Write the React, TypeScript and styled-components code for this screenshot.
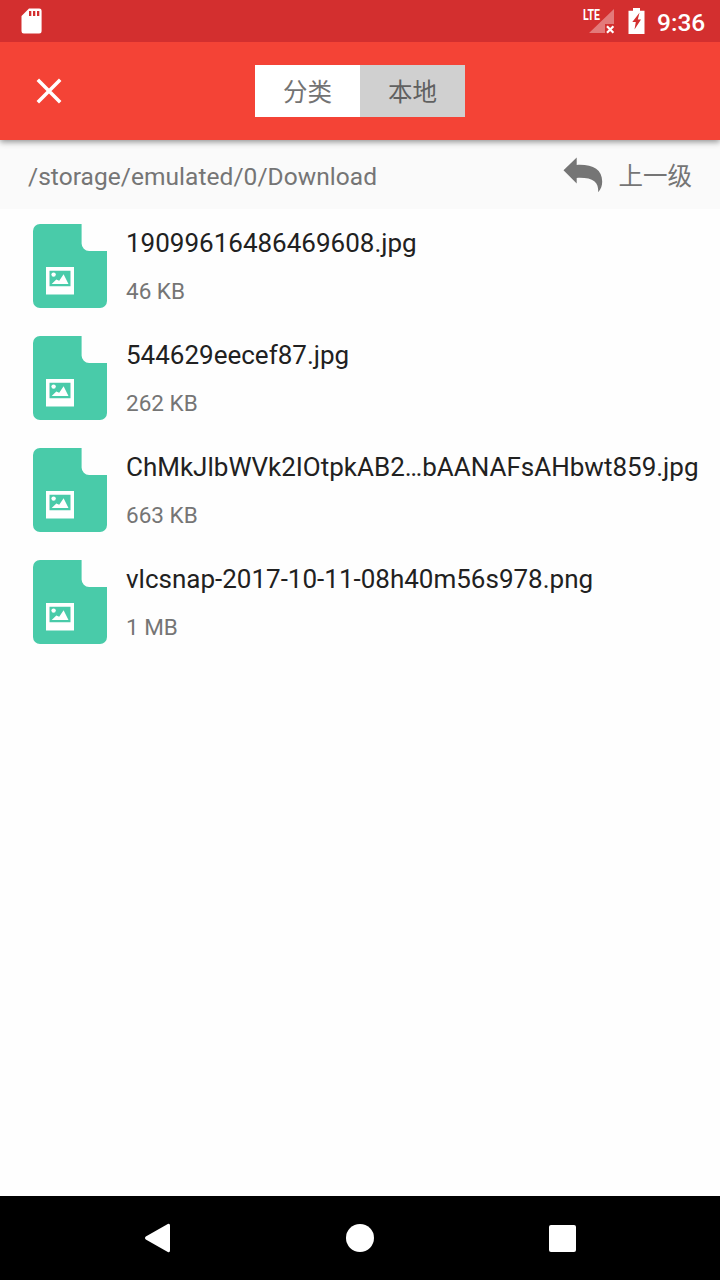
import React from 'react';
import styled, { createGlobalStyle } from 'styled-components';

const GlobalStyle = createGlobalStyle`
  * { box-sizing: border-box; }
  body { margin: 0; background: #fefefe; font-family: Roboto, "Noto Sans CJK SC", sans-serif; }
  svg { display: block; flex: none; }
`;

const Screen = styled.div`
  width: 720px;
  height: 1280px;
  display: flex;
  flex-direction: column;
  overflow: hidden;
  background: #fefefe;
`;

const StatusBar = styled.header`
  height: 42px;
  flex: none;
  display: flex;
  align-items: center;
  padding: 0 14px 0 21px;
  background: #d32f2f;
  z-index: 2;
`;

const StatusIcons = styled.div`
  margin-left: auto;
  display: flex;
  align-items: center;
`;

const BatterySlot = styled.span`
  margin-left: 13px;
`;

const Clock = styled.time`
  width: 49px;
  margin-left: 12px;
  font-size: 24.5px;
  font-weight: 500;
  line-height: 42px;
  padding-top: 2px;
  height: 42px;
  color: #fff;
  white-space: nowrap;
`;

const Toolbar = styled.div`
  height: 98px;
  flex: none;
  display: grid;
  grid-template-columns: 1fr 210px 1fr;
  align-items: center;
  background: #f44336;
  box-shadow: 0 2px 6px rgba(0, 0, 0, 0.42);
  z-index: 1;
`;

const CloseButton = styled.button`
  width: 98px;
  height: 98px;
  display: grid;
  place-items: center;
  border: 0;
  padding: 0;
  background: none;
`;

const Segments = styled.div`
  display: flex;
  height: 52.5px;
`;

const Segment = styled.button<{ $active?: boolean }>`
  flex: 1;
  border: 0;
  padding: 3px 0 0;
  font: 24.5px/49px Roboto, "Noto Sans CJK SC", sans-serif;
  color: ${(p) => (p.$active ? '#606060' : '#737373')};
  background: ${(p) => (p.$active ? '#d0d0d0' : '#fff')};
`;

const PathBar = styled.div`
  height: 69px;
  margin-bottom: 1px;
  flex: none;
  display: flex;
  align-items: center;
  padding: 3px 28px 0;
  background: #fafafa;
  color: #757575;
  font-size: 24.5px;
  letter-spacing: 0.05px;
`;

const UpButton = styled.button`
  margin-left: auto;
  display: flex;
  align-items: center;
  gap: 16px;
  border: 0;
  padding: 0;
  background: none;
  color: inherit;
  font: 24.5px/36px Roboto, "Noto Sans CJK SC", sans-serif;
`;

const ArrowSlot = styled.span`
  margin-top: -2px;
`;

const UpLabel = styled.span`
  margin-top: 1px;
`;

const FileList = styled.ul`
  flex: 1;
  margin: 0;
  padding: 0;
  list-style: none;
`;

const FileRow = styled.li`
  height: 112px;
  display: flex;
  align-items: center;
  gap: 19px;
  padding-left: 33px;
`;

const FileText = styled.div`
  height: 84px;
  display: flex;
  flex-direction: column;
  justify-content: space-between;
  white-space: nowrap;
`;

const FileName = styled.span`
  font-size: 26px;
  line-height: 38px;
  color: #212121;
`;

const FileSize = styled.span`
  font-size: 22.5px;
  line-height: 33px;
  color: #757575;
`;

const NavBar = styled.nav`
  height: 84px;
  flex: none;
  display: flex;
  justify-content: center;
  background: #000;
`;

const NavButton = styled.button`
  width: 202.5px;
  border: 0;
  padding: 0;
  display: grid;
  place-items: center;
  background: none;
`;

const SdIcon = () => (
  <svg width="21" height="26" viewBox="0 0 21 26">
    <path fill="#fff" fillRule="evenodd" d="M8 .5h10.3a2.3 2.3 0 0 1 2.3 2.3v20.4a2.3 2.3 0 0 1-2.3 2.3H2.8A2.3 2.3 0 0 1 .5 23.2V8zM8 3v5h2.3V3zm4 0v5h2.3V3zm4 0v5h2.3V3z" />
  </svg>
);

const SignalIcon = () => (
  <svg width="33" height="28" viewBox="582 7 33 28">
    <path fill="#fff" fillOpacity=".36" d="M614 9v15h-9v9h-16z" />
    <path stroke="#fff" strokeWidth="2.2" d="m607 26.3 6.4 6.4m0-6.4-6.4 6.4" />
    <text x="583" y="20" fill="#fff" fontFamily="Roboto" fontWeight="700" fontSize="15" textLength="17" lengthAdjust="spacingAndGlyphs">LTE</text>
  </svg>
);

const BatteryIcon = () => (
  <svg width="17" height="26" viewBox="0 0 17 26">
    <path fill="#fff" d="M5 0h7v2.7h4.5V26H.5V2.7H5z" />
    <path fill="#d32f2f" d="M11.5 4.8 4.3 14h3.5L6.5 21.4 13 11.5H9.8z" />
  </svg>
);

const CloseIcon = () => (
  <svg width="26" height="26" viewBox="0 0 26 26">
    <path stroke="#fff" strokeWidth="3.5" d="m1.8 1.8 22.4 22.4m0-22.4L1.8 24.2" />
  </svg>
);

const BackArrow = () => (
  <svg width="40" height="36" viewBox="563 157 40 36">
    <path fill="#757575" d="M563.5 170.2 576.7 157.5v7.4c15.5-.8 25.5 4.2 25.5 16.6 0 4-1.2 7.7-4 10.7.7-10.5-5.700-15-21.500-14.300v5.600z" />
  </svg>
);

const ImageFileIcon = () => (
  <svg width="74" height="84" viewBox="0 0 74 84">
    <path fill="#49cba9" d="M7 0h41.6v19.5a7.5 7.5 0 0 0 7.5 7.5H74v50a7 7 0 0 1-7 7H7a7 7 0 0 1-7-7V7a7 7 0 0 1 7-7z" />
    <path fill="#fff" fillRule="evenodd" d="M13 43h28v27.5H13zm3.500 3.800v15.400h21V46.800z" />
    <circle cx="20.6" cy="50.6" r="2.2" fill="#fff" />
    <path fill="#fff" d="m18.7 60 4.6-4.5 2.9 1.3 4.4-6.5 4.9 9.700z" />
  </svg>
);

const files = [
  { name: '19099616486469608.jpg', size: '46 KB' },
  { name: '544629eecef87.jpg', size: '262 KB' },
  { name: 'ChMkJlbWVk2IOtpkAB2…bAANAFsAHbwt859.jpg', size: '663 KB' },
  { name: 'vlcsnap-2017-10-11-08h40m56s978.png', size: '1 MB' },
];

export default function App() {
  return (
    <>
      <GlobalStyle />
      <Screen>
        <StatusBar>
          <SdIcon />
          <StatusIcons>
            <SignalIcon />
            <BatterySlot><BatteryIcon /></BatterySlot>
            <Clock>9:36</Clock>
          </StatusIcons>
        </StatusBar>
        <Toolbar>
          <CloseButton aria-label="关闭"><CloseIcon /></CloseButton>
          <Segments>
            <Segment>分类</Segment>
            <Segment $active>本地</Segment>
          </Segments>
        </Toolbar>
        <PathBar>
          <span>/storage/emulated/0/Download</span>
          <UpButton>
            <ArrowSlot><BackArrow /></ArrowSlot>
            <UpLabel>上一级</UpLabel>
          </UpButton>
        </PathBar>
        <FileList>
          {files.map((file) => (
            <FileRow key={file.name}>
              <ImageFileIcon />
              <FileText>
                <FileName>{file.name}</FileName>
                <FileSize>{file.size}</FileSize>
              </FileText>
            </FileRow>
          ))}
        </FileList>
        <NavBar>
          <NavButton aria-label="返回">
            <svg width="26" height="30" viewBox="0 0 26 30">
              <path fill="#fff" d="M.8 13.6 22.8 1.1Q25 .2 25 2.5v25q0 2.3-2.2 1.4L.8 16.4q-1.6-1.4 0-2.8z" />
            </svg>
          </NavButton>
          <NavButton aria-label="主页">
            <svg width="28" height="28" viewBox="0 0 28 28"><circle cx="14" cy="14" r="14" fill="#fff" /></svg>
          </NavButton>
          <NavButton aria-label="最近">
            <svg width="27" height="27" viewBox="0 0 27 27"><rect width="27" height="27" rx="2" fill="#fff" /></svg>
          </NavButton>
        </NavBar>
      </Screen>
    </>
  );
}
